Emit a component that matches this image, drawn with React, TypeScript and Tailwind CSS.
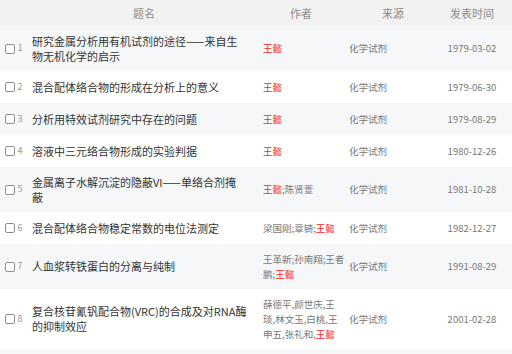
import React from "react";

type Part = { text: string; me?: boolean };

type Row = {
  no: number;
  title: string[];
  authors: Part[][];
  source: string;
  date: string;
};

const rows: Row[] = [
  {
    no: 1,
    title: ["研究金属分析用有机试剂的途径——来自生", "物无机化学的启示"],
    authors: [[{ text: "王懿", me: true }]],
    source: "化学试剂",
    date: "1979-03-02",
  },
  {
    no: 2,
    title: ["混合配体络合物的形成在分析上的意义"],
    authors: [[{ text: "王懿", me: true }]],
    source: "化学试剂",
    date: "1979-06-30",
  },
  {
    no: 3,
    title: ["分析用特效试剂研究中存在的问题"],
    authors: [[{ text: "王懿", me: true }]],
    source: "化学试剂",
    date: "1979-08-29",
  },
  {
    no: 4,
    title: ["溶液中三元络合物形成的实验判据"],
    authors: [[{ text: "王懿", me: true }]],
    source: "化学试剂",
    date: "1980-12-26",
  },
  {
    no: 5,
    title: ["金属离子水解沉淀的隐蔽VI——单络合剂掩", "蔽"],
    authors: [[{ text: "王懿", me: true }, { text: ";陈贤萱" }]],
    source: "化学试剂",
    date: "1981-10-28",
  },
  {
    no: 6,
    title: ["混合配体络合物稳定常数的电位法测定"],
    authors: [[{ text: "梁国刚;章锜;" }, { text: "王懿", me: true }]],
    source: "化学试剂",
    date: "1982-12-27",
  },
  {
    no: 7,
    title: ["人血浆转铁蛋白的分离与纯制"],
    authors: [[{ text: "王革新;孙南翔;王者" }], [{ text: "鹏;" }, { text: "王懿", me: true }]],
    source: "化学试剂",
    date: "1991-08-29",
  },
  {
    no: 8,
    title: ["复合核苷氰钒配合物(VRC)的合成及对RNA酶", "的抑制效应"],
    authors: [
      [{ text: "薛德平,颜世庆,王" }],
      [{ text: "琰,林文玉,白桃,王" }],
      [{ text: "申五,张礼和," }, { text: "王懿", me: true }],
    ],
    source: "化学试剂",
    date: "2001-02-28",
  },
];

const cols = "grid grid-cols-[30px_228px_86px_98px_60px]";

export default function App() {
  return (
    <div className="w-[512px] h-[354px] overflow-hidden bg-white font-['Noto_Sans_CJK_SC','Noto_Sans',sans-serif]">
      <div className={`${cols} h-[26px] items-center bg-[#f2f2f2] text-[11px] text-[#8c8c8c]`}>
        <div />
        <div className="text-center">题名</div>
        <div className="text-center">作者</div>
        <div className="text-center">来源</div>
        <div className="text-center">发表时间</div>
      </div>
      {rows.map((r, i) => (
        <div
          key={r.no}
          className={`${cols} min-h-[32px] items-center py-[7.5px] ${i % 2 === 0 ? "bg-[#f6f7f9]" : "bg-white"}`}
        >
          <div className="flex items-center gap-[2.5px] pl-[5px]">
            <span className="h-[10px] w-[10px] rounded-[2px] border border-[#8f8f8f] bg-white" />
            <span className="-translate-y-[1.5px] text-[9px] leading-none text-[#999]">{r.no}</span>
          </div>
          <div className="whitespace-nowrap pl-[2px] text-[11px] leading-[15px] text-[#333]">
            {r.title.map((t, k) => (
              <div key={k}>{t}</div>
            ))}
          </div>
          <div className="whitespace-nowrap pl-[5px] text-[9.5px] leading-[15px] text-[#777]">
            {r.authors.map((line, k) => (
              <div key={k}>
                {line.map((p, j) => (
                  <span key={j} className={p.me ? "text-[#ff1a1a]" : ""}>
                    {p.text}
                  </span>
                ))}
              </div>
            ))}
          </div>
          <div className="pl-[5px] text-[9.5px] leading-[15px] text-[#777]">{r.source}</div>
          <div className="text-center text-[9.5px] leading-[15px] text-[#777]">{r.date}</div>
        </div>
      ))}
      <div className="h-[12px] bg-[#f6f7f9]" />
    </div>
  );
}
